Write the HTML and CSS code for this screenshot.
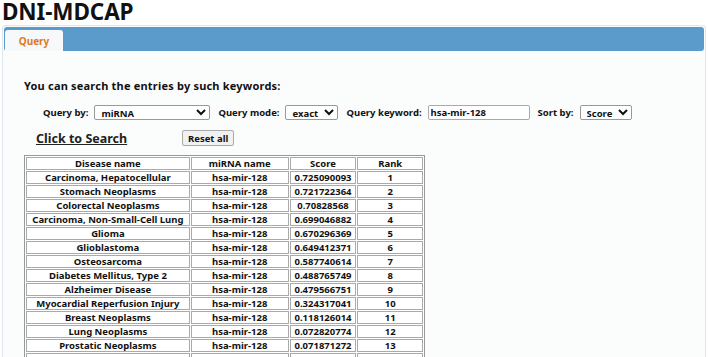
FILE: index.html
```html
<!DOCTYPE html>
<html>
<head>
<meta charset="utf-8">
<link rel="stylesheet" href="styles.css">
</head>
<body>
<h1 class="title">DNI-MDCAP</h1>
<div class="panel">
  <div class="tabbar">
    <div class="tab">Query</div>
  </div>
  <div class="content">
    <p class="intro">You can search the entries by such keywords:</p>
    <div class="controls">
      <label>Query by:</label>
      <select class="sel sel-by"><option>miRNA</option></select>
      <label>Query mode:</label>
      <select class="sel sel-mode"><option>exact</option></select>
      <label>Query keyword:</label>
      <input class="kw" type="text" value="hsa-mir-128">
      <label>Sort by:</label>
      <select class="sel sel-sort"><option>Score</option></select>
    </div>
    <div class="actions">
      <a class="search" href="#">Click to Search</a>
      <button class="reset">Reset all</button>
    </div>
    <table class="results">
      <tr><th class="c1">Disease name</th><th class="c2">miRNA name</th><th class="c3">Score</th><th class="c4">Rank</th></tr>
      <tr><td>Carcinoma, Hepatocellular</td><td>hsa-mir-128</td><td>0.725090093</td><td>1</td></tr>
      <tr><td>Stomach Neoplasms</td><td>hsa-mir-128</td><td>0.721722364</td><td>2</td></tr>
      <tr><td>Colorectal Neoplasms</td><td>hsa-mir-128</td><td>0.70828568</td><td>3</td></tr>
      <tr><td>Carcinoma, Non-Small-Cell Lung</td><td>hsa-mir-128</td><td>0.699046882</td><td>4</td></tr>
      <tr><td>Glioma</td><td>hsa-mir-128</td><td>0.670296369</td><td>5</td></tr>
      <tr><td>Glioblastoma</td><td>hsa-mir-128</td><td>0.649412371</td><td>6</td></tr>
      <tr><td>Osteosarcoma</td><td>hsa-mir-128</td><td>0.587740614</td><td>7</td></tr>
      <tr><td>Diabetes Mellitus, Type 2</td><td>hsa-mir-128</td><td>0.488765749</td><td>8</td></tr>
      <tr><td>Alzheimer Disease</td><td>hsa-mir-128</td><td>0.479566751</td><td>9</td></tr>
      <tr><td>Myocardial Reperfusion Injury</td><td>hsa-mir-128</td><td>0.324317041</td><td>10</td></tr>
      <tr><td>Breast Neoplasms</td><td>hsa-mir-128</td><td>0.118126014</td><td>11</td></tr>
      <tr><td>Lung Neoplasms</td><td>hsa-mir-128</td><td>0.072820774</td><td>12</td></tr>
      <tr><td>Prostatic Neoplasms</td><td>hsa-mir-128</td><td>0.071871272</td><td>13</td></tr>
      <tr><td>&nbsp;</td><td>&nbsp;</td><td>&nbsp;</td><td>&nbsp;</td></tr>
    </table>
  </div>
</div>
</body>
</html>
```
FILE: styles.css
```css
* { box-sizing: border-box; }
html, body { margin: 0; padding: 0; background: #fff; overflow: hidden; }
body { font-family: "Noto Sans", "Open Sans", sans-serif; color: #111; }
.title {
  margin: 0 0 0 2px;
  height: 25px;
  font-size: 22.5px;
  line-height: 25px;
  font-weight: 700;
  letter-spacing: -0.1px;
  position: relative;
  top: -1px;
}
.panel {
  margin: 0 2px;
  border: 1px solid #dde6ea;
  border-radius: 3px;
  background: #fbfcfc;
  padding: 1px;
  height: 400px;
}
.tabbar {
  background: #5b9bcc;
  border-radius: 3px;
  height: 24px;
  padding: 3px 0 0 1px;
  display: flex;
  align-items: flex-end;
}
.tab {
  width: 58px;
  height: 21px;
  background: #f6f8fa;
  border-radius: 3px 3px 0 0;
  color: #e07b1b;
  font-weight: 700;
  font-size: 10px;
  display: flex;
  align-items: center;
  justify-content: center;
}
.content { padding: 28px 0 0 20px; }
.intro {
  margin: 0;
  font-size: 11px;
  font-weight: 700;
  letter-spacing: 0.2px;
  line-height: 14px;
}
.controls {
  display: flex;
  align-items: center;
  margin: 12px 0 0 19px;
  font-size: 9.5px;
  font-weight: 700;
  height: 15px;
}
.controls label { margin-right: 6px; }
.sel, .kw {
  font-family: inherit;
  font-weight: 700;
  font-size: 9.5px;
  height: 15px;
  padding: 0 2px;
  border: 1px solid #999;
  border-radius: 2px;
  background: #fff;
  color: #111;
  margin-right: 8px;
}
.sel-by { width: 116px; }
.sel-mode { width: 53px; }
.kw { width: 102px; border-color: #aaa; }
.sel-sort { width: 52px; }
.actions {
  display: flex;
  align-items: center;
  margin: 9px 0 0 12px;
  height: 18px;
}
.search {
  color: #222;
  font-size: 12.5px;
  font-weight: 700;
  text-decoration: underline;
  width: 146px;
}
.reset {
  font-family: inherit;
  font-size: 9.5px;
  font-weight: 700;
  height: 16px;
  padding: 0 5px;
  border: 1px solid #aaa;
  border-radius: 2px;
  background: #f1f1f1;
  color: #111;
}
.results {
  margin-top: 8px;
  border: 1px solid #999;
  border-spacing: 1px;
  background: #fff;
  font-size: 9.5px;
  font-weight: 700;
  width: 401px;
}
.results th, .results td {
  border: 1px solid #aaa;
  height: 13px;
  padding: 0 3px;
  text-align: center;
  line-height: 11px;
  white-space: nowrap;
}
.results th { font-weight: 700; }
.c1 { width: 164px; }
.c2 { width: 99px; }
.c3 { width: 67px; }
.c4 { width: 67px; }
```
